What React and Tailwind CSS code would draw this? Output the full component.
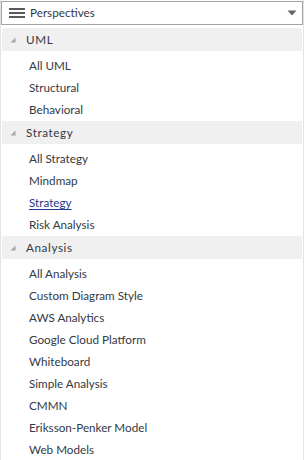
import React from 'react';

const groups = [
  { title: 'UML', items: ['All UML', 'Structural', 'Behavioral'] },
  { title: 'Strategy', items: ['All Strategy', 'Mindmap', 'Strategy', 'Risk Analysis'], active: 'Strategy' },
  {
    title: 'Analysis',
    items: [
      'All Analysis',
      'Custom Diagram Style',
      'AWS Analytics',
      'Google Cloud Platform',
      'Whiteboard',
      'Simple Analysis',
      'CMMN',
      'Eriksson-Penker Model',
      'Web Models',
    ],
  },
];

const Expander = () => (
  <svg width="6" height="6" viewBox="0 0 6 6" className="shrink-0">
    <polygon points="5.5,0.5 5.5,5.5 0.5,5.5" fill="#a6a6a6" />
  </svg>
);

const App = () => {
  return (
    <div
      className="w-[304px] h-[460px] overflow-hidden bg-white border-x border-[#e3e3e3] pt-px text-[11.7px] text-[#333945]"
      style={{ fontFamily: 'Lato, "Noto Sans", sans-serif' }}
    >
      {/* Perspective selector */}
      <div className="h-[24px] border border-[#a3a3a3] flex items-center pl-[7px] pr-[5px]">
        <div className="flex flex-col gap-[2px] w-[16px]">
          <div className="h-[2px] bg-[#5a5a5a]" />
          <div className="h-[2px] bg-[#5a5a5a]" />
          <div className="h-[2px] bg-[#5a5a5a]" />
        </div>
        <span className="ml-[5px] flex-1 leading-none">Perspectives</span>
        <svg width="10" height="6" viewBox="0 0 10 6">
          <polygon points="0.5,0.5 9.5,0.5 5,5.5" fill="#666" />
        </svg>
      </div>

      {/* Groups */}
      <div className="px-px mt-[3px]">
        {groups.map((g) => (
          <div key={g.title}>
            <div className="h-[23px] mb-[4px] bg-[#f0f0f0] flex items-center pl-[8px]">
              <Expander />
              <span className="ml-[10px] tracking-[0.6px]">{g.title}</span>
            </div>
            {g.items.map((item) => (
              <div key={item} className="h-[22px] flex items-center pl-[27px]">
                {item === g.active ? (
                  <span className="text-[#1c3b8c] underline underline-offset-2">{item}</span>
                ) : (
                  <span>{item}</span>
                )}
              </div>
            ))}
          </div>
        ))}
      </div>
    </div>
  );
};

export default App;
